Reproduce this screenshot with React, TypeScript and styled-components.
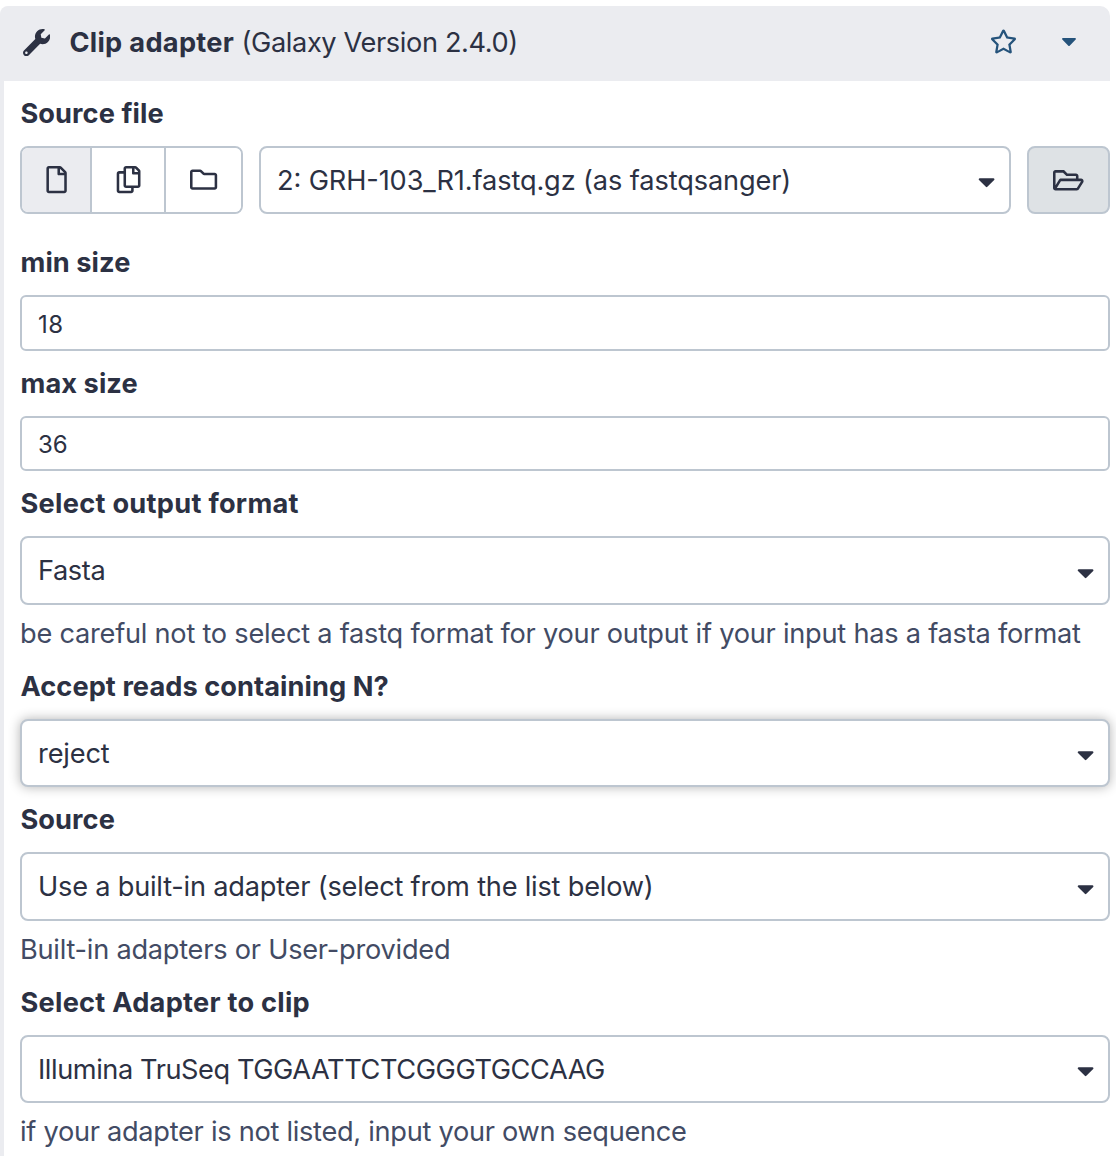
import React from "react";
import styled, { createGlobalStyle } from "styled-components";
import {
  FaWrench,
  FaRegStar,
  FaCaretDown,
  FaRegFile,
  FaRegCopy,
  FaRegFolder,
  FaRegFolderOpen,
} from "react-icons/fa";

const ink = "#2c3143";
const border = "#bdc6d0";
const panel = "#ebecf0";

const GlobalStyle = createGlobalStyle`
  * { box-sizing: border-box; }
  body {
    margin: 0;
    background: #fff;
    color: ${ink};
    font-family: Inter, "Liberation Sans", sans-serif;
    font-size: 27.2px;
    font-feature-settings: "calt" 1;
    line-height: 40px;
  }
`;

const Page = styled.div`
  height: 1156px;
  padding: 6px 6px 0 0;
  overflow: hidden;
`;

const Card = styled.section`
  height: 1170px;
  border-left: 4px solid ${panel};
  border-radius: 10px 10px 0 0;
`;

const Header = styled.header`
  display: flex;
  align-items: center;
  height: 75px;
  margin-left: -4px;
  padding: 0 29px 2px 23.2px;
  background: ${panel};
  border-radius: 8px 10px 0 0;
`;

const Title = styled.h1`
  flex: 1;
  margin: 0 0 0 19px;
  font-size: inherit;
  font-weight: 400;
  letter-spacing: -0.38px;
  white-space: nowrap;

  b {
    letter-spacing: 0.3px;
  }
`;

const HeaderActions = styled.div`
  display: flex;
  align-items: center;
  gap: 40px;
  padding-bottom: 3px;
  color: #25537b;
  font-size: 24px;
`;

const StarIcon = styled(FaRegStar)`
  font-size: 27px;
`;

const Icon = styled.span<{ $drop?: number }>`
  display: flex;
  padding-top: ${(p) => p.$drop ?? 0}px;
`;

const Form = styled.div`
  display: flex;
  flex-direction: column;
  padding-left: 16px;
`;

const Label = styled.label<{ $gap?: number; $track?: number }>`
  height: 65px;
  margin-top: ${(p) => p.$gap ?? 0}px;
  padding: 13px 0 0 0.5px;
  font-weight: 700;
  letter-spacing: ${(p) => p.$track ?? 0.07}px;
  white-space: nowrap;
`;

const Help = styled.p<{ $track?: number }>`
  height: 49px;
  margin: 0;
  padding-top: 9px;
  color: #424b64;
  letter-spacing: ${(p) => p.$track ?? -0.245}px;
  white-space: nowrap;
`;

const SourceRow = styled.div`
  display: flex;
  gap: 16px;
`;

const ButtonGroup = styled.div`
  display: flex;
  width: 223px;
  height: 68px;
  border: 2px solid ${border};
  border-radius: 8px;
  overflow: hidden;
`;

const GroupButton = styled.button<{ $width: number; $active?: boolean }>`
  display: flex;
  align-items: center;
  justify-content: center;
  width: ${(p) => p.$width}px;
  padding: 0 0 0 1px;
  border: 0;
  background: ${(p) => (p.$active ? panel : "#fff")};
  color: inherit;
  font-size: 27.2px;

  & + & {
    border-left: 2px solid ${border};
  }
`;

const BrowseButton = styled.button`
  display: flex;
  align-items: center;
  justify-content: center;
  width: 83px;
  height: 68px;
  padding: 0;
  border: 2px solid ${border};
  border-radius: 8px;
  background: #dee2e5;
  color: inherit;
  font-size: 30.6px;
`;

const SelectBox = styled.div<{ $height?: number; $focused?: boolean }>`
  display: flex;
  flex: 0 0 auto;
  align-items: center;
  justify-content: space-between;
  height: ${(p) => p.$height ?? 68}px;
  padding: 0 9px 0 16px;
  border: 2px solid ${border};
  border-radius: 8px;
  background: #fff;
  white-space: nowrap;
  box-shadow: ${(p) => (p.$focused ? "0 0 12px rgba(0, 0, 0, 0.3)" : "none")};

  ${SourceRow} & {
    flex: 1;
  }
`;

const SelectValue = styled.span<{ $track: number }>`
  padding-top: 1px;
  letter-spacing: ${(p) => p.$track}px;
`;

const NumberInput = styled.input<{ $height: number; $track?: number }>`
  width: 100%;
  height: ${(p) => p.$height}px;
  padding: 2px 16px 0;
  border: 2px solid ${border};
  border-radius: 6px;
  background: #fff;
  color: inherit;
  font-family: inherit;
  font-size: 24px;
  letter-spacing: ${(p) => p.$track ?? 0}px;
  outline: 0;
`;

interface SelectProps {
  value: string;
  height?: number;
  focused?: boolean;
  drop?: number;
  track?: number;
}

function Select({ value, height, focused, drop = 4, track = 0 }: SelectProps) {
  return (
    <SelectBox $height={height} $focused={focused}>
      <SelectValue $track={track}>{value}</SelectValue>
      <Icon $drop={drop}>
        <FaCaretDown />
      </Icon>
    </SelectBox>
  );
}

export default function App() {
  return (
    <Page>
      <GlobalStyle />
      <Card>
        <Header>
          <FaWrench />
          <Title>
            <b>Clip adapter</b> (Galaxy Version 2.4.0)
          </Title>
          <HeaderActions>
            <StarIcon />
            <FaCaretDown />
          </HeaderActions>
        </Header>
        <Form>
          <Label>Source file</Label>
          <SourceRow>
            <ButtonGroup>
              <GroupButton $width={68} $active>
                <FaRegFile />
              </GroupButton>
              <GroupButton $width={74}>
                <FaRegCopy />
              </GroupButton>
              <GroupButton $width={77}>
                <FaRegFolder />
              </GroupButton>
            </ButtonGroup>
            <Select value="2: GRH-103_R1.fastq.gz (as fastqsanger)" track={-0.125} />
            <BrowseButton>
              <FaRegFolderOpen />
            </BrowseButton>
          </SourceRow>

          <Label $gap={16}>min size</Label>
          <NumberInput $height={56} $track={0.6} defaultValue="18" />

          <Label>max size</Label>
          <NumberInput $height={55} defaultValue="36" />

          <Label $track={0.28}>Select output format</Label>
          <Select value="Fasta" height={69} track={-0.4} />
          <Help>be careful not to select a fastq format for your output if your input has a fasta format</Help>

          <Label>Accept reads containing N?</Label>
          <Select value="reject" focused track={-0.15} />

          <Label>Source</Label>
          <Select value="Use a built-in adapter (select from the list below)" height={69} track={-0.215} />
          <Help>Built-in adapters or User-provided</Help>

          <Label $track={0.26}>Select Adapter to clip</Label>
          <Select value="Illumina TruSeq TGGAATTCTCGGGTGCCAAG" track={-0.43} />
          <Help $track={-0.285}>if your adapter is not listed, input your own sequence</Help>
        </Form>
      </Card>
    </Page>
  );
}
